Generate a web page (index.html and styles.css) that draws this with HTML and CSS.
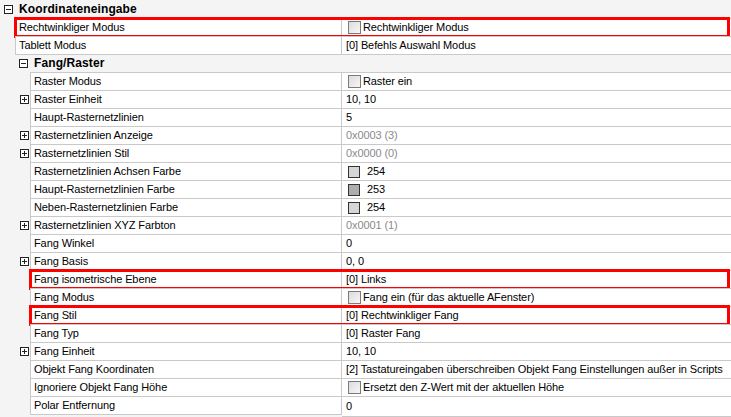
FILE: index.html
```html
<!DOCTYPE html>
<html>
<head>
<meta charset="utf-8">
<link rel="stylesheet" href="styles.css">
</head>
<body>
<div class="grid">
  <div class="row cat lv0">
    <span class="gut"><span class="tog"><svg width="9" height="9" viewBox="0 0 9 9"><rect x="0.5" y="0.5" width="8" height="8" fill="#fff" stroke="#222"/><path d="M2 4.5h5" stroke="#222"/></svg></span></span>
    <span class="cname">Koordinateneingabe</span>
  </div>
  <div class="row prop lv1">
    <span class="gut"></span>
    <span class="name">Rechtwinkliger Modus</span>
    <span class="val"><span class="cb"></span>Rechtwinkliger Modus</span>
    <span class="mark"></span>
  </div>
  <div class="row prop lv1">
    <span class="gut"></span>
    <span class="name">Tablett Modus</span>
    <span class="val">[0] Befehls Auswahl Modus</span>
  </div>
  <div class="row cat lv1">
    <span class="gut"><span class="tog"><svg width="9" height="9" viewBox="0 0 9 9"><rect x="0.5" y="0.5" width="8" height="8" fill="#fff" stroke="#222"/><path d="M2 4.5h5" stroke="#222"/></svg></span></span>
    <span class="cname">Fang/Raster</span>
  </div>
  <div class="row prop lv2">
    <span class="gut"></span>
    <span class="name">Raster Modus</span>
    <span class="val"><span class="cb"></span>Raster ein</span>
  </div>
  <div class="row prop lv2">
    <span class="gut"><span class="tog"><svg width="9" height="9" viewBox="0 0 9 9"><rect x="0.5" y="0.5" width="8" height="8" fill="#fff" stroke="#222"/><path d="M2 4.5h5M4.5 2v5" stroke="#222"/></svg></span></span>
    <span class="name">Raster Einheit</span>
    <span class="val">10, 10</span>
  </div>
  <div class="row prop lv2">
    <span class="gut"></span>
    <span class="name">Haupt-Rasternetzlinien</span>
    <span class="val">5</span>
  </div>
  <div class="row prop lv2">
    <span class="gut"><span class="tog"><svg width="9" height="9" viewBox="0 0 9 9"><rect x="0.5" y="0.5" width="8" height="8" fill="#fff" stroke="#222"/><path d="M2 4.5h5M4.5 2v5" stroke="#222"/></svg></span></span>
    <span class="name">Rasternetzlinien Anzeige</span>
    <span class="val dim">0x0003 (3)</span>
  </div>
  <div class="row prop lv2">
    <span class="gut"><span class="tog"><svg width="9" height="9" viewBox="0 0 9 9"><rect x="0.5" y="0.5" width="8" height="8" fill="#fff" stroke="#222"/><path d="M2 4.5h5M4.5 2v5" stroke="#222"/></svg></span></span>
    <span class="name">Rasternetzlinien Stil</span>
    <span class="val dim">0x0000 (0)</span>
  </div>
  <div class="row prop lv2">
    <span class="gut"></span>
    <span class="name">Rasternetzlinien Achsen Farbe</span>
    <span class="val"><span class="sw c254"></span>254</span>
  </div>
  <div class="row prop lv2">
    <span class="gut"></span>
    <span class="name">Haupt-Rasternetzlinien Farbe</span>
    <span class="val"><span class="sw c253"></span>253</span>
  </div>
  <div class="row prop lv2">
    <span class="gut"></span>
    <span class="name">Neben-Rasternetzlinien Farbe</span>
    <span class="val"><span class="sw c254"></span>254</span>
  </div>
  <div class="row prop lv2">
    <span class="gut"><span class="tog"><svg width="9" height="9" viewBox="0 0 9 9"><rect x="0.5" y="0.5" width="8" height="8" fill="#fff" stroke="#222"/><path d="M2 4.5h5M4.5 2v5" stroke="#222"/></svg></span></span>
    <span class="name">Rasternetzlinien XYZ Farbton</span>
    <span class="val dim">0x0001 (1)</span>
  </div>
  <div class="row prop lv2">
    <span class="gut"></span>
    <span class="name">Fang Winkel</span>
    <span class="val">0</span>
  </div>
  <div class="row prop lv2">
    <span class="gut"><span class="tog"><svg width="9" height="9" viewBox="0 0 9 9"><rect x="0.5" y="0.5" width="8" height="8" fill="#fff" stroke="#222"/><path d="M2 4.5h5M4.5 2v5" stroke="#222"/></svg></span></span>
    <span class="name">Fang Basis</span>
    <span class="val">0, 0</span>
  </div>
  <div class="row prop lv2">
    <span class="gut"></span>
    <span class="name">Fang isometrische Ebene</span>
    <span class="val">[0] Links</span>
    <span class="mark"></span>
  </div>
  <div class="row prop lv2">
    <span class="gut"></span>
    <span class="name">Fang Modus</span>
    <span class="val"><span class="cb"></span>Fang ein (für das aktuelle AFenster)</span>
  </div>
  <div class="row prop lv2">
    <span class="gut"></span>
    <span class="name">Fang Stil</span>
    <span class="val">[0] Rechtwinkliger Fang</span>
    <span class="mark"></span>
  </div>
  <div class="row prop lv2">
    <span class="gut"></span>
    <span class="name">Fang Typ</span>
    <span class="val">[0] Raster Fang</span>
  </div>
  <div class="row prop lv2">
    <span class="gut"><span class="tog"><svg width="9" height="9" viewBox="0 0 9 9"><rect x="0.5" y="0.5" width="8" height="8" fill="#fff" stroke="#222"/><path d="M2 4.5h5M4.5 2v5" stroke="#222"/></svg></span></span>
    <span class="name">Fang Einheit</span>
    <span class="val">10, 10</span>
  </div>
  <div class="row prop lv2">
    <span class="gut"></span>
    <span class="name">Objekt Fang Koordinaten</span>
    <span class="val">[2] Tastatureingaben überschreiben Objekt Fang Einstellungen außer in Scripts</span>
  </div>
  <div class="row prop lv2">
    <span class="gut"></span>
    <span class="name">Ignoriere Objekt Fang Höhe</span>
    <span class="val"><span class="cb"></span>Ersetzt den Z-Wert mit der aktuellen Höhe</span>
  </div>
  <div class="row prop lv2 last">
    <span class="gut"></span>
    <span class="name">Polar Entfernung</span>
    <span class="val">0</span>
  </div>
</div>
</body>
</html>
```
FILE: styles.css
```css
html, body {
  margin: 0;
  padding: 0;
  background: #f4f4f4;
}
body {
  width: 731px;
  height: 417px;
  overflow: hidden;
  font-family: "Liberation Sans", Arial, sans-serif;
  font-size: 11px;
  letter-spacing: -0.1px;
  color: #000;
}
.grid {
  display: flex;
  flex-direction: column;
}
.row {
  position: relative;
  display: flex;
  height: 18px;
  box-sizing: border-box;
}
.gut {
  flex: none;
  display: flex;
  align-items: center;
  box-sizing: border-box;
}
.lv1 .gut { width: 15px; }
.lv2 .gut { width: 30px; }
.lv0.cat .gut { width: 15px; padding-left: 4px; }
.lv1.cat .gut { width: 30px; padding-left: 19px; }
.lv2 .gut .tog { margin-left: 20px; }
.tog { display: block; width: 9px; height: 9px; }
.tog svg { display: block; }
.cat.lv1 .cname {
  border-top: 1px solid #c9c9c9;
  margin-left: -15px;
  padding-left: 19px;
  line-height: 17px;
}
.cname {
  flex: 1;
  font-weight: bold;
  font-size: 12px;
  letter-spacing: 0.1px;
  padding-left: 4px;
  line-height: 18px;
}
.name, .val {
  background: #fff;
  border-top: 1px solid #c9c9c9;
  line-height: 17px;
  white-space: nowrap;
  overflow: hidden;
  display: flex;
  align-items: center;
}
.last .name, .last .val { border-bottom: 1px solid #c9c9c9; height: 19px; }
.name {
  flex: none;
  box-sizing: border-box;
  border-left: 1px solid #c9c9c9;
  border-right: 1px solid #c9c9c9;
  padding-left: 3px;
}
.lv1 .name { width: 327px; }
.lv2 .name { width: 312px; }
.val {
  flex: 1;
  padding-left: 4px;
}
.dim { color: #8a8a8a; }
.cb {
  display: inline-block;
  width: 11px;
  height: 11px;
  border: 1px solid #7a7a7a;
  background: linear-gradient(135deg, #dcdcdc, #f6f6f6);
  margin: 0 2px 0 2px;
  flex: none;
}
.sw {
  display: inline-block;
  width: 10px;
  height: 10px;
  border: 1px solid #333;
  margin: 0 7px 0 2px;
  flex: none;
}
.c254 { background: #d6d6d6; }
.c253 { background: #adadad; }
.mark {
  position: absolute;
  top: -1px;
  bottom: -2px;
  right: 1px;
  border: 3px solid #ff0000;
  pointer-events: none;
}
.lv1 .mark { left: 14px; }
.lv2 .mark { left: 29px; }
```
